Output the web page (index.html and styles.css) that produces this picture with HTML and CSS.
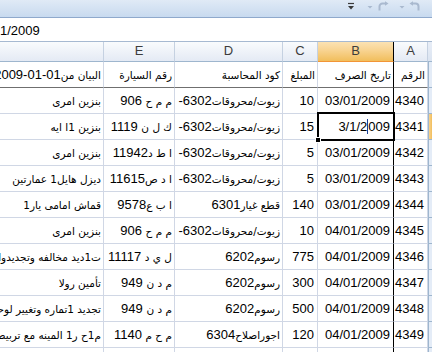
FILE: index.html
```html
<!DOCTYPE html>
<html lang="ar">
<head>
<meta charset="utf-8">
<title>Excel sheet</title>
<link rel="stylesheet" href="styles.css">
</head>
<body>
<div class="qat">
  <svg class="ico" width="8" height="10" viewBox="0 0 8 10"><path d="M1 2.5h6" stroke="#3a3a3a" stroke-width="1.2"/><path d="M1 5h6L4 8.5z" fill="#3a3a3a"/></svg>
  <svg class="ico gap1" width="6" height="10" viewBox="0 0 6 10"><path d="M0.5 5h5L3 7.5z" fill="#a9b9cf"/></svg>
  <svg class="ico" width="12" height="11" viewBox="0 0 12 11"><path d="M2.5 9.5V5.5a3 3 0 0 1 3-3h3" fill="none" stroke="#a9b9cf" stroke-width="2"/><path d="M8 0.3l3.5 2.2L8 4.8z" fill="#a9b9cf"/></svg>
  <svg class="ico gap2" width="6" height="10" viewBox="0 0 6 10"><path d="M0.5 5h5L3 7.5z" fill="#a9b9cf"/></svg>
  <svg class="ico" width="13" height="11" viewBox="0 0 13 11"><path d="M9.5 9.5V5.5a3 3 0 0 0-3-3h-3" fill="none" stroke="#a9b9cf" stroke-width="2"/><path d="M4 0.3L0.5 2.5 4 4.8z" fill="#a9b9cf"/></svg>
</div>
<div class="fbar"><span class="ftext">1/2009</span></div>
<div class="sheet">
  <div class="c h"></div>
  <div class="c h">E</div>
  <div class="c h">D</div>
  <div class="c h">C</div>
  <div class="c h hsel">B</div>
  <div class="c h">A</div>
  <div class="c h hcorner"></div>

  <div class="c t r1"><span class="ar">البيان من</span><span class="iso">2009-01-01</span></div>
  <div class="c t r1"><span class="ar">رقم السيارة</span></div>
  <div class="c t r1"><span class="ar">كود المحاسبة</span></div>
  <div class="c t r1"><span class="ar">المبلغ</span></div>
  <div class="c t r1 bcol"><span class="ar">تاريخ الصرف</span></div>
  <div class="c t r1"><span class="ar">الرقم</span></div>
  <div class="c rh r1"></div>

  <div class="c t"><span class="ar">بنزين امرى</span></div>
  <div class="c t"><span class="ar">م م ح</span> 906</div>
  <div class="c t"><span class="ar">زيوت/محروقات</span>6302-</div>
  <div class="c n">10</div>
  <div class="c n bcol">03/01/2009</div>
  <div class="c n">4340</div>
  <div class="c rh"></div>

  <div class="c t"><span class="ar">بنزين 1ا ايه</span></div>
  <div class="c t"><span class="ar">ك ل ن</span> 1119</div>
  <div class="c t"><span class="ar">زيوت/محروقات</span>6302-</div>
  <div class="c n">15</div>
  <div class="c n bcol sel">3/1/2<span class="caret"></span>009</div>
  <div class="c n">4341</div>
  <div class="c rh rsel"></div>

  <div class="c t"><span class="ar">بنزين امرى</span></div>
  <div class="c t"><span class="ar">ا ط د</span>11942</div>
  <div class="c t"><span class="ar">زيوت/محروقات</span>6302-</div>
  <div class="c n">5</div>
  <div class="c n bcol">03/01/2009</div>
  <div class="c n">4342</div>
  <div class="c rh"></div>

  <div class="c t"><span class="ar">ديزل هايل1 عمارتين</span></div>
  <div class="c t"><span class="ar">ا د ص</span>11615</div>
  <div class="c t"><span class="ar">زيوت/محروقات</span>6302-</div>
  <div class="c n">5</div>
  <div class="c n bcol">03/01/2009</div>
  <div class="c n">4343</div>
  <div class="c rh"></div>

  <div class="c t"><span class="ar">قماش امامى يار1</span></div>
  <div class="c t"><span class="ar">ا ب ع</span>9578</div>
  <div class="c t"><span class="ar">قطع غيار</span>6301</div>
  <div class="c n">140</div>
  <div class="c n bcol">03/01/2009</div>
  <div class="c n">4344</div>
  <div class="c rh"></div>

  <div class="c t"><span class="ar">بنزين امرى</span></div>
  <div class="c t"><span class="ar">م م ح</span> 906</div>
  <div class="c t"><span class="ar">زيوت/محروقات</span>6302-</div>
  <div class="c n">10</div>
  <div class="c n bcol">04/01/2009</div>
  <div class="c n">4345</div>
  <div class="c rh"></div>

  <div class="c t"><span class="ar">ت1ديد مخالفه وتجديدوامر شغل</span></div>
  <div class="c t"><span class="ar">ل ي د</span> 11117</div>
  <div class="c t"><span class="ar">رسوم</span>6202</div>
  <div class="c n">775</div>
  <div class="c n bcol">04/01/2009</div>
  <div class="c n">4346</div>
  <div class="c rh"></div>

  <div class="c t"><span class="ar">تأمين رولا</span></div>
  <div class="c t"><span class="ar">م د ن</span> 949</div>
  <div class="c t"><span class="ar">رسوم</span>6202</div>
  <div class="c n">300</div>
  <div class="c n bcol">04/01/2009</div>
  <div class="c n">4347</div>
  <div class="c rh"></div>

  <div class="c t"><span class="ar">تجديد 1تماره وتغيير لوحات</span></div>
  <div class="c t"><span class="ar">م د ن</span> 949</div>
  <div class="c t"><span class="ar">رسوم</span>6202</div>
  <div class="c n">500</div>
  <div class="c n bcol">04/01/2009</div>
  <div class="c n">4348</div>
  <div class="c rh"></div>

  <div class="c t"><span class="ar">م1ح ر1 المينه مع تربيط الشاسيه</span></div>
  <div class="c t"><span class="ar">م ح م</span> 1140</div>
  <div class="c t"><span class="ar">اجوراصلاح</span>6304</div>
  <div class="c n">120</div>
  <div class="c n bcol">04/01/2009</div>
  <div class="c n">4349</div>
  <div class="c rh"></div>

  <div class="c t"></div>
  <div class="c t"></div>
  <div class="c t"></div>
  <div class="c n"></div>
  <div class="c n bcol"></div>
  <div class="c n"></div>
  <div class="c rh"></div>
</div>
</body>
</html>
```

FILE: styles.css
```css
html, body {
  margin: 0;
  padding: 0;
  background: #ffffff;
  overflow: hidden;
}
body {
  width: 432px;
  height: 352px;
  font-family: "Liberation Sans", "DejaVu Sans", sans-serif;
  color: #000;
}
.qat {
  box-sizing: border-box;
  height: 18px;
  border-bottom: 1px solid #8fa9cc;
  background: linear-gradient(#e0eaf6, #c8daef);
  display: flex;
  justify-content: flex-end;
  align-items: flex-start;
  padding-right: 10px;
  padding-top: 1px;
}
.ico { display: block; margin-left: 4px; }
.gap1 { margin-left: 12px; }
.gap2 { margin-left: 10px; }
.fbar {
  height: 24px;
  box-sizing: border-box;
  border-top: 1px solid #ffffff;
  border-bottom: 1px solid #a6b9d1;
  display: flex;
  align-items: center;
  font-size: 13px;
  background: #fff;
}
.sheet {
  display: grid;
  grid-template-columns: 104px 71px 108px 35px 76px 34px 4px;
  grid-template-rows: 20px 26px repeat(11, 26px);
}
.c {
  box-sizing: border-box;
  border-right: 1px solid #d0d7e5;
  border-bottom: 1px solid #d0d7e5;
  overflow: hidden;
  white-space: nowrap;
  font-size: 13px;
  line-height: 25px;
  padding-right: 3px;
  text-align: right;
}
.t { direction: rtl; padding-right: 2px; }
.n { direction: ltr; }
.iso { direction: ltr; unicode-bidi: isolate; }
.ar {
  font-family: "DejaVu Sans", sans-serif;
  font-size: 10.5px;
}
.h {
  background: linear-gradient(#f9fbfd, #e4eaf4);
  border-right: 1px solid #c5d1e1;
  border-bottom: 1px solid #9eb6ce;
  text-align: center;
  padding: 0;
  line-height: 18px;
  color: #3c3c3c;
}
.hsel {
  background: linear-gradient(#fbe2b3 0%, #f8d390 45%, #f1be5c 100%);
  border-bottom-color: #f29536;
  border-right: 1px solid #000;
}
.hcorner { background: linear-gradient(#e8eef7, #dbe4f1); border-right: 0; }
.r1 { border-bottom-color: #6f6f6f; }
.bcol { border-right-color: #000; }
.rh {
  background: #e4ecf7;
  border-left: 1px solid #9eb6ce;
  border-right: 0;
  border-bottom-color: #9eb6ce;
  padding: 0;
}
.rsel { background: linear-gradient(90deg, #f8d390, #f1be5c); }
.sel { position: relative; overflow: visible; }
.sel::after {
  content: "";
  position: absolute;
  left: -1px;
  right: -2px;
  top: -2px;
  bottom: -2px;
  border: 2px solid #000;
}
.sel::before {
  content: "";
  position: absolute;
  left: -3px;
  bottom: -4px;
  width: 4px;
  height: 4px;
  background: #000;
  border: 1px solid #fff;
  z-index: 2;
}
.caret {
  display: inline-block;
  width: 1px;
  height: 15px;
  background: #1c3f94;
  vertical-align: -3px;
}
```
